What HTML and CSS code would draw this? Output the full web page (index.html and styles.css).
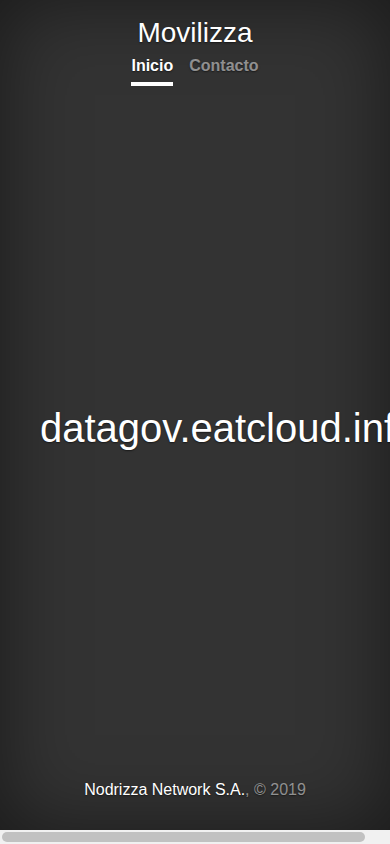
FILE: index.html
```html
<!DOCTYPE html>
<html lang="es">
<head>
<meta charset="utf-8">
<meta name="viewport" content="width=device-width, initial-scale=1">
<title>Movilizza</title>
<link rel="stylesheet" href="styles.css">
</head>
<body>
<div class="cover">
  <header class="masthead">
    <h3 class="brand">Movilizza</h3>
    <nav class="nav">
      <a class="nav-link active" href="#">Inicio</a>
      <a class="nav-link" href="#">Contacto</a>
    </nav>
  </header>
  <main class="inner">
    <h1 class="cover-heading">datagov.eatcloud.info</h1>
  </main>
  <footer class="mastfoot">
    <p><a href="#">Nodrizza Network S.A.</a>, © 2019</p>
  </footer>
</div>
<div class="hscroll" aria-hidden="true"><div class="hscroll-thumb"></div></div>
</body>
</html>
```
FILE: styles.css
```css
html, body {
  height: 100%;
}
body {
  margin: 0;
  display: flex;
  flex-direction: column;
  overflow: hidden;
  background: #333;
  color: #fff;
  font-family: "Liberation Sans", Arial, sans-serif;
  font-size: 16px;
  line-height: 1.5;
  text-shadow: 0 0.05rem 0.1rem rgba(0,0,0,.5);
}
.cover {
  flex: 1;
  display: flex;
  flex-direction: column;
  min-height: 0;
  padding: 16px;
  box-sizing: border-box;
  text-align: center;
  box-shadow: inset 0 0 5rem rgba(0,0,0,.5);
}
.masthead {
  display: flex;
  flex-direction: column;
  align-items: center;
}
.brand {
  margin: 0;
  font-size: 28px;
  font-weight: 400;
  line-height: 1.2;
}
.nav {
  display: flex;
  justify-content: center;
  gap: 16px;
}
.nav-link {
  padding: 4px 0;
  font-weight: 700;
  color: rgba(255,255,255,.5);
  text-decoration: none;
  border-bottom: 4px solid transparent;
}
.nav-link.active {
  color: #fff;
  border-bottom-color: #fff;
}
.inner {
  margin: auto 0;
  padding: 0 24px;
}
.cover-heading {
  margin: 0 0 8px;
  font-size: 40px;
  font-weight: 400;
  line-height: 1.2;
  white-space: nowrap;
}
.mastfoot {
  color: rgba(255,255,255,.5);
}
.mastfoot p {
  margin: 0 0 12px;
}
.mastfoot a {
  color: #fff;
  text-decoration: none;
}
.hscroll {
  flex: 0 0 14px;
  display: flex;
  align-items: center;
  padding: 0 25px 0 2px;
  background: #f1f1f1;
}
.hscroll-thumb {
  flex: 1;
  height: 10px;
  border-radius: 5px;
  background: #c1c1c1;
}
```
